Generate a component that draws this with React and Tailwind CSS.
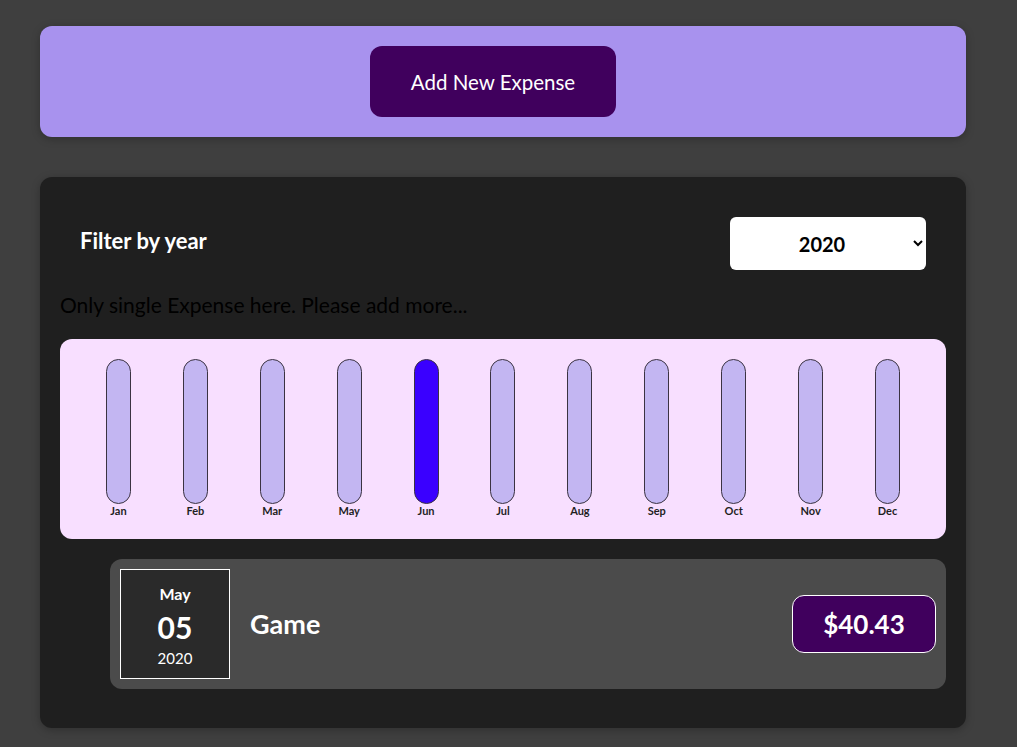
import { useState } from "react"

const MONTHS = [
  { label: "Jan", active: false },
  { label: "Feb", active: false },
  { label: "Mar", active: false },
  { label: "May", active: false },
  { label: "Jun", active: true },
  { label: "Jul", active: false },
  { label: "Aug", active: false },
  { label: "Sep", active: false },
  { label: "Oct", active: false },
  { label: "Nov", active: false },
  { label: "Dec", active: false },
]

export default function App() {
  const [year, setYear] = useState("2020")

  return (
    <div className="min-h-[747px] bg-[#3f3f3f] px-10 pt-[26px] pb-5 font-['Lato','Noto_Sans',sans-serif]">
      <div className="w-[926px]">
        {/* New expense */}
        <div className="h-[111px] bg-[#a892ee] rounded-xl shadow-[0_2px_8px_rgba(0,0,0,0.25)] flex justify-center pt-5">
          <button className="mr-5 w-[246px] h-[71px] rounded-xl bg-[#40005d] text-white text-[20.5px] pt-[2px]">
            Add New Expense
          </button>
        </div>

        {/* Expenses */}
        <div className="mt-10 bg-[#1f1f1f] rounded-xl px-5 pt-5 pb-[39px] shadow-[0_2px_8px_rgba(0,0,0,0.25)]">
          <div className="flex items-center justify-between px-5 py-5">
            <span className="text-white font-bold text-[22px] pb-[7px]">Filter by year</span>
            <select
              value={year}
              onChange={(e) => setYear(e.target.value)}
              className="w-[196px] h-[53px] bg-white rounded-md text-black font-bold text-[20px] text-center px-2"
            >
              <option>2022</option>
              <option>2021</option>
              <option>2020</option>
              <option>2019</option>
            </select>
          </div>

          <p className="text-black text-[21px] leading-[30px] mb-[19px]">Only single Expense here. Please add more...</p>

          <div className="h-[200px] bg-[#f8dfff] rounded-xl px-5 pt-5 flex">
            {MONTHS.map((m) => (
              <div key={m.label} className="flex-1 flex flex-col items-center">
                <div
                  className={`w-[25px] h-[145px] rounded-full border border-[#3b3342] ${
                    m.active ? "bg-[#3a00ff]" : "bg-[#c3b6f2]"
                  }`}
                />
                <span className="text-[11px] leading-[14px] font-bold text-[#1f1f1f]">{m.label}</span>
              </div>
            ))}
          </div>

          <div className="mt-5 ml-[50px] h-[130px] bg-[#4b4b4b] rounded-xl p-[10px] flex items-center">
            <div className="w-[110px] h-[110px] bg-[#2a2a2a] border border-white flex flex-col items-center pt-[14px] text-white">
              <span className="text-[16px] font-bold leading-5">May</span>
              <span className="mt-[4px] text-[30px] font-bold leading-[38px]">05</span>
              <span className="mt-[2px] text-[15px] leading-5">2020</span>
            </div>
            <h2 className="ml-5 flex-1 text-white font-bold text-[27px]">Game</h2>
            <div className="w-[144px] h-[58px] bg-[#40005d] border border-white rounded-xl flex items-center justify-center text-white font-bold text-[26px]">
              $40.43
            </div>
          </div>
        </div>
      </div>
    </div>
  )
}
